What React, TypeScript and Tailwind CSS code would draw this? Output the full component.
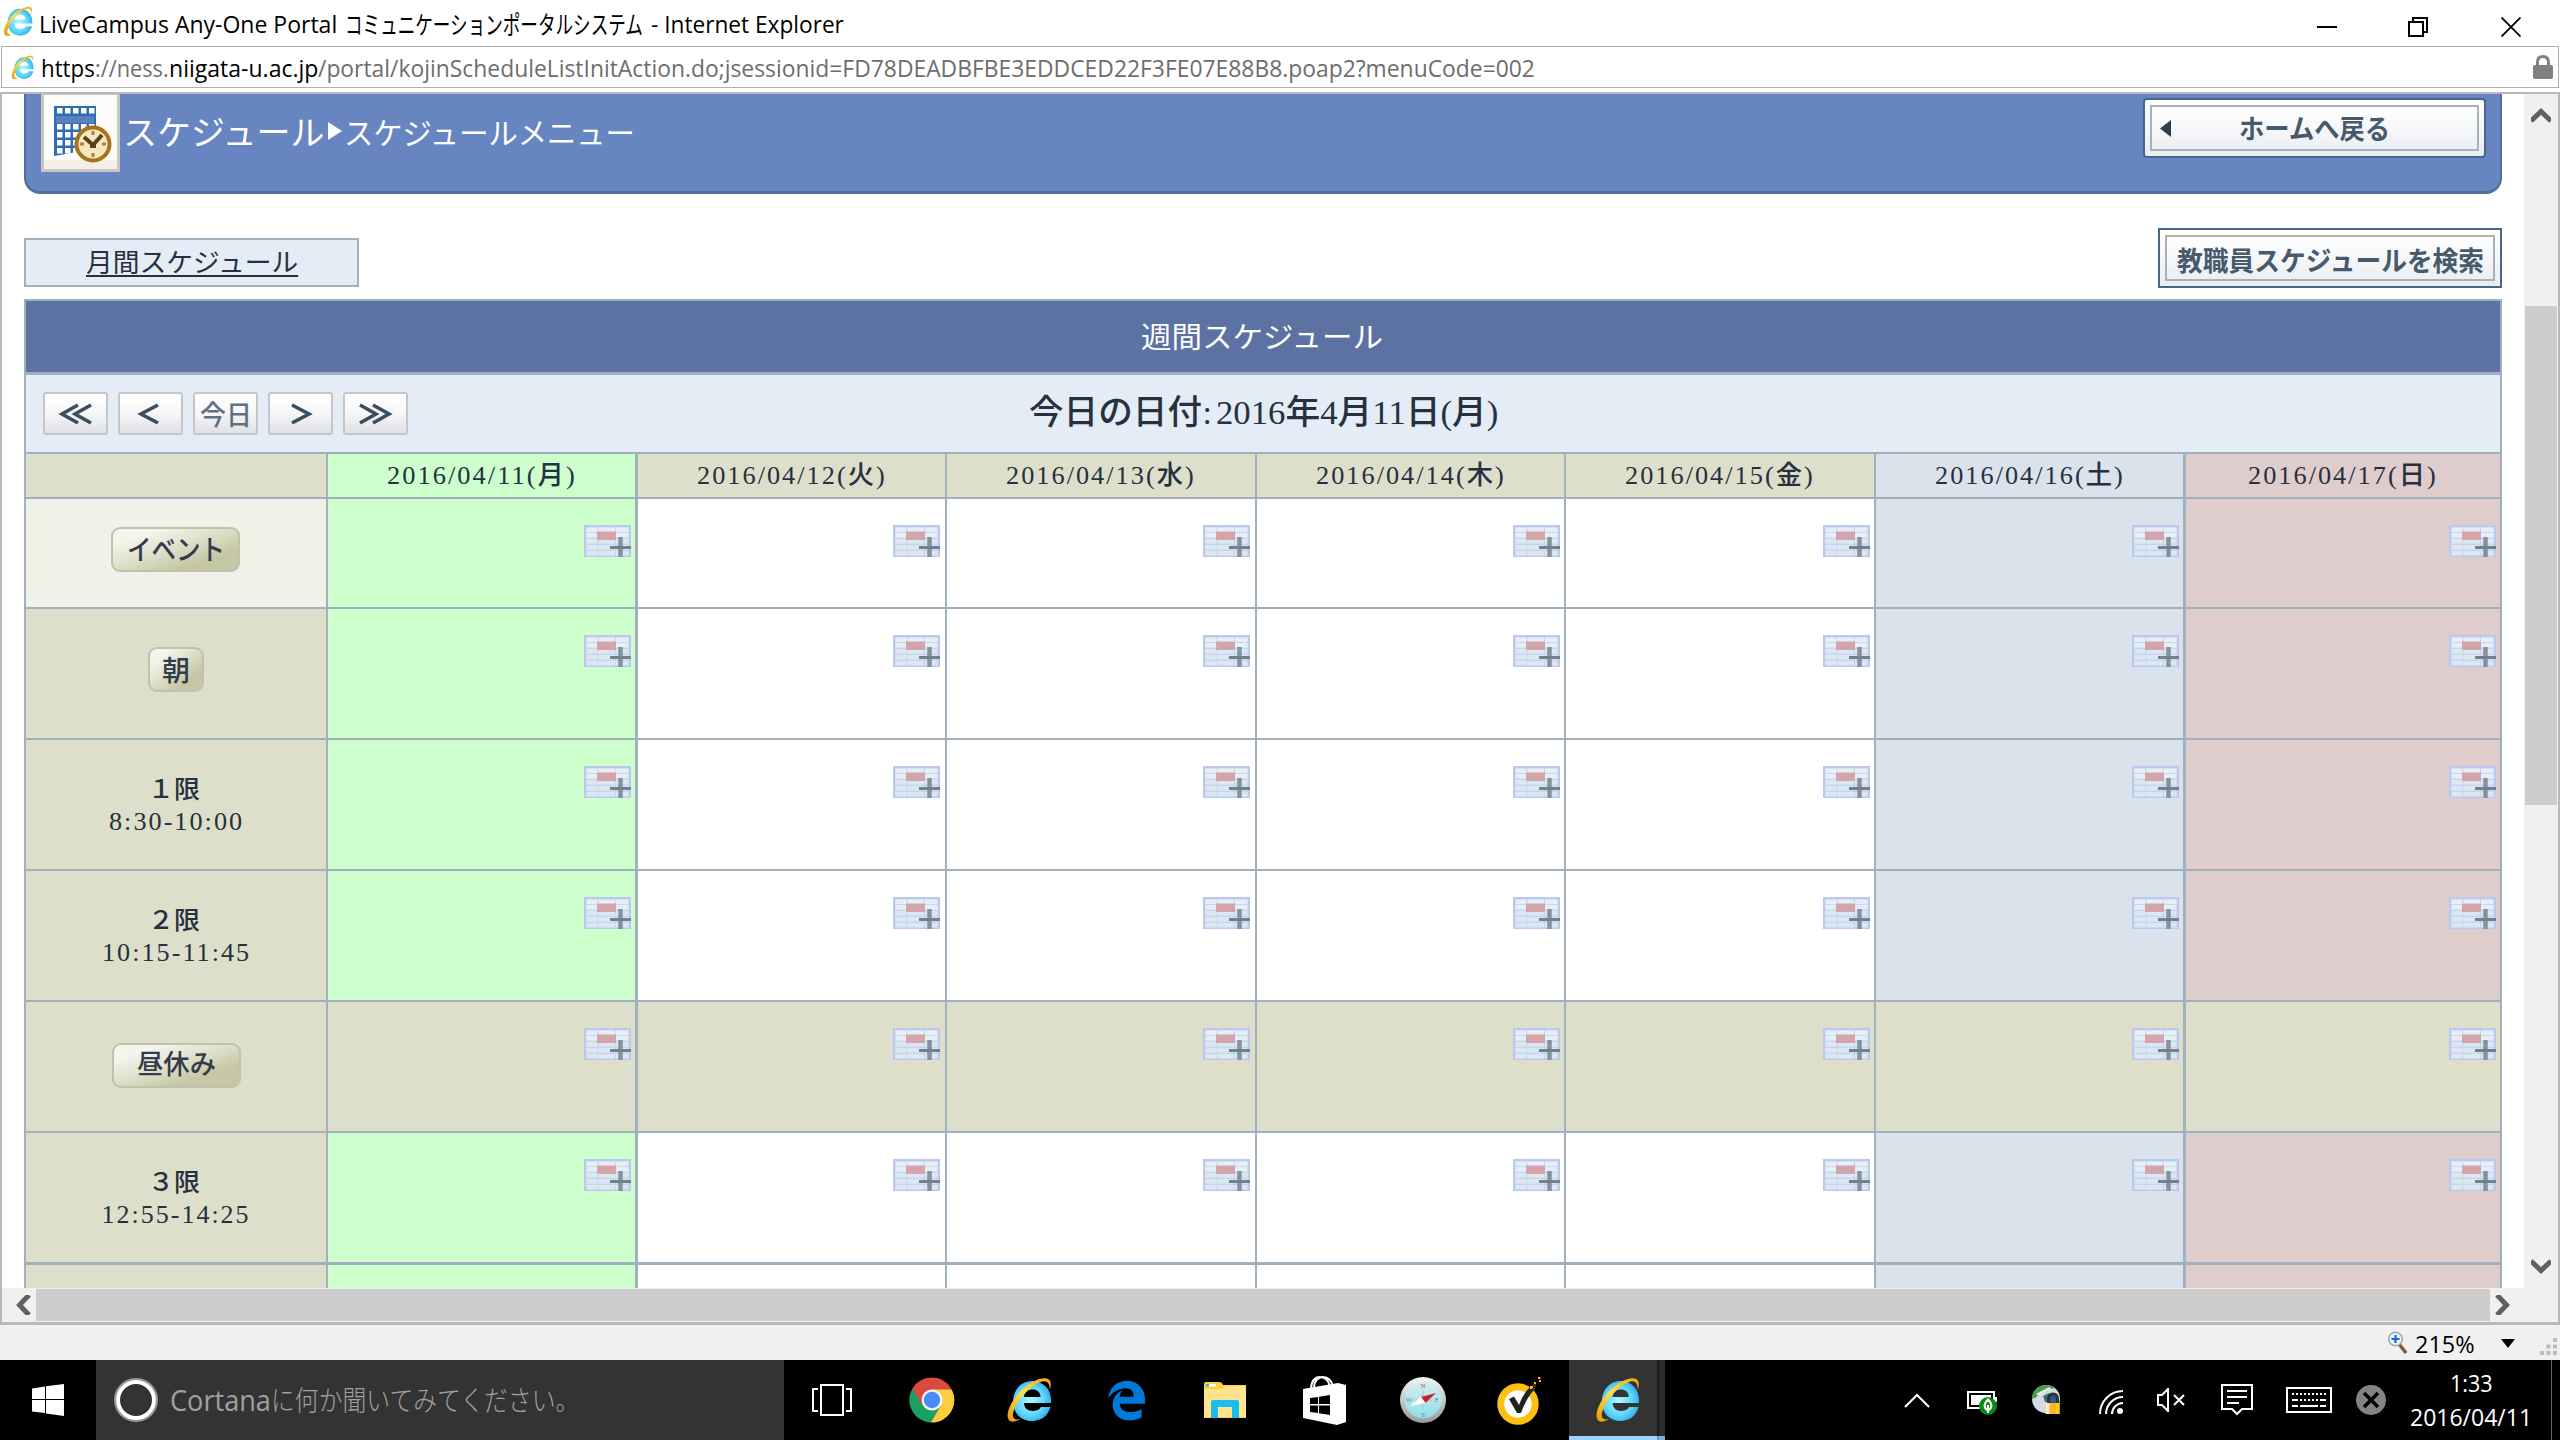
import { useLayoutEffect, useRef, type ReactNode } from "react";
import { FaEdgeLegacy } from "react-icons/fa";

/** Single line of text squeezed or stretched horizontally to a given width. */
function Fit({ w, className = "", children }: { w: number; className?: string; children: ReactNode }) {
  const ref = useRef<HTMLSpanElement>(null);
  useLayoutEffect(() => {
    const el = ref.current;
    if (el) el.style.transform = `scaleX(${w / el.offsetWidth})`;
  }, [w]);
  return (
    <span className={`block shrink-0 whitespace-nowrap ${className}`} style={{ width: w }}>
      <span ref={ref} className="inline-block origin-left">
        {children}
      </span>
    </span>
  );
}

const UI = "font-['Open_Sans','Noto_Sans_CJK_JP',sans-serif]";
const JP = "font-['Noto_Sans_CJK_JP',sans-serif]";
const SERIF = "font-['Liberation_Serif','Noto_Sans_CJK_JP',serif]";

function IeIcon({ className, id }: { className: string; id: string }) {
  return (
    <svg viewBox="0 0 46 46" preserveAspectRatio="none" className={className}>
      <defs>
        <radialGradient id={`${id}b`} cx="0.45" cy="0.5" r="0.6">
          <stop offset="0" stopColor="#b4f6ff" />
          <stop offset="0.6" stopColor="#5fd8fb" />
          <stop offset="1" stopColor="#2ba4e4" />
        </radialGradient>
        <linearGradient id={`${id}y`} x1="0" y1="1" x2="1" y2="0">
          <stop offset="0" stopColor="#e59a08" />
          <stop offset="0.5" stopColor="#ffdf4d" />
          <stop offset="1" stopColor="#f3a712" />
        </linearGradient>
      </defs>
      <path
        fillRule="evenodd"
        fill={`url(#${id}b)`}
        d="M45 26H18c0 5 4 8 8.500 8c4 0 7-1.500 8.500-4H44.500C42 39 35 44 26 44C15 44 7 36 7 25C7 13 15 4 26 4C38 4 46 13 45 26ZM18 20H34.500C34.500 15 31 12.500 26.500 12.500C22 12.500 18.500 15 18 20Z"
      />
      <path
        fill={`url(#${id}y)`}
        d="M43.500 13C46.500 5 44 0 36 1.500C22 4 5 21 2 35C0 44 5 47.500 14.500 42C8 43.500 5.500 41 7.500 34.500C11.500 22 25 7.500 36 4.500C42 3 44 7 43.500 13Z"
      />
    </svg>
  );
}

function ScheduleIcon() {
  return (
    <svg viewBox="0 0 79 78" className="h-[78px] w-[79px] shrink-0">
      <rect width="79" height="78" fill="#c9c5c5" />
      <rect x="3" y="1" width="73" height="74" fill="#fdfcfa" />
      <rect x="3" y="66" width="73" height="9" fill="#f3f0e8" />
      <path d="M13 12H55V58H36L13 62Z" fill="#2f6db3" />
      <g fill="#fff">
        {[0, 1, 2, 3, 4].map((c) =>
          [0, 2, 3, 4, 5].map((r) => <rect key={`${c}-${r}`} x={16 + c * 8} y={14 + r * 8} width="5.500" height="5.500" />),
        )}
      </g>
      <rect x="15" y="22" width="38" height="7" fill="#5a80c0" />
      <circle cx="52" cy="50" r="16.500" fill="#f7e6c0" stroke="#a8741a" strokeWidth="4" />
      <path d="M43 43L52 51L61 41" fill="none" stroke="#5a4018" strokeWidth="4" />
      <path d="M52 50V54" stroke="#5a4018" strokeWidth="6" />
      <path d="M52 37v4M52 59v4M39 50h4M61 50h4" stroke="#a08450" strokeWidth="3" />
    </svg>
  );
}

function AddIcon() {
  return (
    <svg viewBox="0 0 47 32" className="h-[32px] w-[47px]">
      <rect width="47" height="32" fill="#bcc8f0" />
      <rect x="2" y="2" width="43" height="28" fill="#c6d6e8" />
      {[2.5, 8, 14, 20, 26].map((y) =>
        [2.5, 14.5, 32].map((x, i) => (
          <rect key={`${x}-${y}`} x={x} y={y} width={[11, 16.5, 12.5][i]} height={4.6} fill={y < 10 ? "#e6eef7" : "#dbe7f3"} />
        )),
      )}
      <rect x="13" y="6.500" width="19" height="8.500" fill="#d3a4aa" />
      <path d="M36.500 12V32" stroke="#84929f" strokeWidth="4.500" />
      <path d="M26 22.500H47" stroke="#72808e" strokeWidth="3" />
    </svg>
  );
}

function ImageButton({ className, children }: { className: string; children: ReactNode }) {
  return (
    <button
      className={`flex shrink-0 border-2 border-[#44688c] bg-linear-to-b from-white to-[#e9edf1] p-[5px] ${className}`}
    >
      <span className="relative flex h-full w-full items-center justify-center border-2 border-[#a9b0b6] bg-linear-to-b from-white to-[#eceff3]">
        {children}
      </span>
    </button>
  );
}

function NavButton({ kind }: { kind: "first" | "prev" | "today" | "next" | "last" }) {
  const paths = {
    first: "M35 13L19 22L35 31M48 13L32 22L48 31",
    prev: "M40 13L23 22L40 31",
    next: "M24 13L41 22L24 31",
    last: "M17 13L33 22L17 31M30 13L46 22L30 31",
  };
  return (
    <button className="flex h-[43px] w-[65px] items-center justify-center rounded-[3px] border-2 border-[#c4c6c9] bg-linear-to-b from-white via-[#f6f6f8] to-[#dfe1e6]">
      {kind === "today" ? (
        <Fit w={52} className={`${JP} text-[27px] leading-[36px] font-medium text-[#5f7182]`}>
          今日
        </Fit>
      ) : (
        <svg viewBox="0 0 65 43" className="h-[43px] w-[65px] shrink-0" fill="none" stroke="#3b4e60" strokeWidth="3.600">
          <path d={paths[kind]} />
        </svg>
      )}
    </button>
  );
}

function Pill({ text, box, w, size }: { text: string; box: string; w: number; size: string }) {
  return (
    <button
      className={`flex h-[45px] items-center justify-center rounded-[9px] border-2 border-[#c0c2ac] bg-linear-to-br from-[#f3f4ec] from-20% via-[#dcddc6] to-[#c5c7a4] to-75% ${box}`}
    >
      <Fit w={w} className={`${JP} font-medium text-[#333c4a] ${size}`}>
        {text}
      </Fit>
    </button>
  );
}

const LINE = "border-[#a1b0bd]";
const COLS = "grid grid-cols-[302px_309px_310px_310px_309px_310px_309px_319px]";
const days = [
  { label: "2016/04/11(月)", head: "bg-[#ccffcc]", body: "bg-[#ccffcc]", edge: "border-l-2", pad: "pr-[4px]" },
  { label: "2016/04/12(火)", head: "bg-[#dddfca]", body: "bg-white", edge: "border-l-3", pad: "pr-[5px]" },
  { label: "2016/04/13(水)", head: "bg-[#dddfca]", body: "bg-white", edge: "border-l-2", pad: "pr-[5px]" },
  { label: "2016/04/14(木)", head: "bg-[#dddfca]", body: "bg-white", edge: "border-l-2", pad: "pr-[4px]" },
  { label: "2016/04/15(金)", head: "bg-[#dddfca]", body: "bg-white", edge: "border-l-2", pad: "pr-[4px]" },
  { label: "2016/04/16(土)", head: "bg-[#dae2eb]", body: "bg-[#dae2eb]", edge: "border-l-2", pad: "pr-[4px]" },
  { label: "2016/04/17(日)", head: "bg-[#dfcccd]", body: "bg-[#dfcccd]", edge: "border-l-3 border-r-2", pad: "pr-[4px]" },
];

type Row = { h: string; first: ReactNode; firstBg?: string; beige?: boolean; empty?: boolean };

function Period({ name, time, w }: { name: string; time: string; w: number }) {
  return (
    <div className="flex flex-col items-center text-[#26303f]">
      <Fit w={52} className={`${JP} mr-[4px] text-[25px] leading-[34px] font-medium`}>
        {name}
      </Fit>
      <Fit w={w} className={`${SERIF} text-[26px] leading-[36px] tracking-[2px]`}>
        {time}
      </Fit>
    </div>
  );
}

const rows: Row[] = [
  {
    h: "h-[110px] border-t-2",
    firstBg: "bg-[#f0f1e8]",
    first: (
      <div className="pr-[1px] pb-[8px]">
        <Pill text="イベント" box="w-[129px]" w={98} size="text-[28px] leading-[34px] pb-[2px]" />
      </div>
    ),
  },
  {
    h: "h-[131px] border-t-2",
    first: (
      <div className="pb-[8px]">
        <Pill text="朝" box="w-[56px]" w={28} size="text-[28px] leading-[38px] pb-[2px]" />
      </div>
    ),
  },
  { h: "h-[131px] border-t-2", first: <Period name="１限" time="8:30-10:00" w={135} /> },
  { h: "h-[131px] border-t-2", first: <Period name="２限" time="10:15-11:45" w={149} /> },
  {
    h: "h-[131px] border-t-2",
    beige: true,
    first: (
      <div className="pb-[3px]">
        <Pill text="昼休み" box="w-[129px]" w={79} size="text-[27px] leading-[34px] pb-[5px]" />
      </div>
    ),
  },
  { h: "h-[131px] border-t-2", first: <Period name="３限" time="12:55-14:25" w={149} /> },
  { h: "h-[26px] border-t-3", first: null, empty: true },
];

function Taskbar() {
  return (
    <footer className="flex h-[80px] bg-black text-white">
      <div className="flex w-[96px] items-center pl-[32px]">
        <svg viewBox="0 0 32 32" className="h-8 w-8" fill="#fff">
          <path d="M0 4.500L13 2.500V15H0ZM14 2.300L32 0V15H14ZM0 16H13V29L0 27.500ZM14 16H32V32L14 29.500Z" />
        </svg>
      </div>
      <div className="flex w-[688px] items-center bg-[#333] pl-[18px]">
        <span className="h-[44px] w-[44px] rounded-full border-2 border-[#999] p-0">
          <span className="block h-full w-full rounded-full border-4 border-white" />
        </span>
        <span className={`ml-[12px] flex text-[#a0a0a0] ${UI}`}>
          <Fit w={101} className="text-[29px] leading-[46px]">
            Cortana
          </Fit>
          <Fit w={308} className="text-[28px] leading-[46px] font-light">
            に何か聞いてみてください。
          </Fit>
        </span>
      </div>
      {/* Pinned applications */}
      <div className="flex items-center pl-[28px]">
        <svg viewBox="0 0 40 32" className="h-[32px] w-[40px]" fill="none" stroke="#fff" strokeWidth="2">
          <rect x="9" y="1" width="22" height="30" />
          <path d="M6 5H1V27H6M34 5H39V27H34" />
        </svg>
        <svg viewBox="0 0 46 46" className="ml-[57px] h-[46px] w-[46px]">
          <path d="M23 23L3.500 11.500A22.500 22.500 0 0 1 42.500 12Z" fill="#db4a3f" />
          <path d="M23 23L3.500 11.500A22.500 22.500 0 0 0 22.500 45.500L32 28Z" fill="#1aa15f" />
          <path d="M23 23V12.500H42.700A22.500 22.500 0 0 1 22 45.500L32 28Z" fill="#ffcd40" />
          <path d="M3.500 11.500L13 28L23 23L23 12.500Z" fill="#db4a3f" />
          <circle cx="23" cy="23" r="10.500" fill="#f4f6f5" />
          <circle cx="23" cy="23" r="8.200" fill="#4c8bf5" />
        </svg>
        <IeIcon id="pin" className="ml-[51px] h-[46px] w-[46px]" />
        <FaEdgeLegacy className="ml-[54px] h-[43px] w-[41px] text-[#0078d7]" />
        <svg viewBox="0 0 42 36" className="ml-[57px] h-[36px] w-[42px]">
          <path d="M0 2Q0 0 2 0H15Q18 0 19 3H42V36H0Z" fill="#ffd23e" />
          <path d="M0 7H19L21 4H42V35H0Z" fill="#ffe38f" />
          <rect x="2" y="2" width="10" height="2.500" fill="#fff" />
          <rect x="2" y="2" width="3" height="2.500" fill="#28b7e8" />
          <path d="M7 20Q7 18 9 18H33Q35 18 35 20V36H28V25H14V36H7Z" fill="#1bbcf0" />
        </svg>
        <svg viewBox="0 0 43 49" className="ml-[57px] h-[49px] w-[43px]">
          <path d="M0 13L35 7L43 9V46L34 49L0 42Z" fill="#fff" />
          <path d="M8 13C8 5 12 1 17 1S26 5 26 9M11 12C11 5 15 1 20 1S29 5 29 9" fill="none" stroke="#fff" strokeWidth="2" />
          <path d="M7 22L15 21V28H7ZM16 20.800L27 19V28H16ZM7 29.500H15V37L7 36ZM16 29.500H27V39L16 37.300Z" fill="#000" />
        </svg>
        <svg viewBox="0 0 48 48" className="ml-[53px] h-[48px] w-[48px]">
          <defs>
            <linearGradient id="rim" x1="0" y1="0" x2="0" y2="1">
              <stop offset="0" stopColor="#f4f4f4" />
              <stop offset="1" stopColor="#9a9a9a" />
            </linearGradient>
            <linearGradient id="dial" x1="0" y1="0" x2="0" y2="1">
              <stop offset="0" stopColor="#d5eef2" />
              <stop offset="1" stopColor="#8fdde6" />
            </linearGradient>
          </defs>
          <circle cx="24" cy="24" r="23" fill="url(#rim)" />
          <circle cx="24" cy="24" r="18.500" fill="url(#dial)" />
          <path d="M24 12L25.500 22.500L36 24L25.500 25.500L24 36L22.500 25.500L12 24L22.500 22.500Z" fill="#b5ccd0" />
          <path d="M37 17L26.500 27L22 21Z" fill="#cc2228" />
          <path d="M11 30L22 21L26.500 27Z" fill="#fff" />
          <g fontSize="7" textAnchor="middle" fontFamily="Liberation Serif">
            <text x="24" y="12" fill="#d33">N</text>
            <text x="24" y="41" fill="#5a8a90">S</text>
            <text x="10" y="26" fill="#5a8a90">W</text>
            <text x="38" y="26" fill="#5a8a90">E</text>
          </g>
        </svg>
        <svg viewBox="0 0 46 49" className="ml-[50px] h-[49px] w-[46px]">
          <circle cx="21" cy="28" r="17.200" fill="#fff" stroke="#fdc010" strokeWidth="7" />
          <path d="M12 23L17 20.500L22 29C25 21 28 16 34 10L38 13C31 20 27 29 24 37H20Z" fill="#222" />
          <path d="M33 10h3v3h-3zM37 6h2v2h-2zM41 1h2.500v2H41zM42 4h2v2h-2z" fill="#fdc010" />
          <path d="M35 12h3v3h-3zM36 8h3v3h-3z" fill="#333" />
        </svg>
      </div>
      <div className="ml-[26px] flex h-full">
        <div className="flex w-[88px] items-center justify-center border-b-4 border-[#99d1ff] bg-[#333] pt-1 pl-2">
          <IeIcon id="run" className="h-[46px] w-[45px]" />
        </div>
        <div className="w-[2px] border-b-4 border-[#6f97b8] bg-[#1b1b1b]" />
        <div className="w-[6px] border-b-4 border-[#80aed3] bg-[#2b2b2b]" />
      </div>
      {/* Notification area */}
      <div className="ml-auto flex items-center">
        <svg viewBox="0 0 26 15" className="h-[15px] w-[26px]" fill="none" stroke="#fff" strokeWidth="2">
          <path d="M1 14L13 2L25 14" />
        </svg>
        <svg viewBox="0 0 31 26" className="mt-[4px] ml-[37px] h-[26px] w-[31px]">
          <rect x="1" y="3" width="26" height="16" fill="none" stroke="#fff" strokeWidth="2" />
          <rect x="4" y="6" width="20" height="10" fill="#fff" />
          <path d="M28 8h2v5h-2z" fill="#fff" />
          <circle cx="21" cy="17" r="9" fill="#0a8a1a" />
          <path d="M21 10.500C16.500 15 16.500 19 21 21.500C25.500 19 25.500 15 21 10.500ZM21 16V24" fill="none" stroke="#fff" strokeWidth="2" />
        </svg>
        <svg viewBox="0 0 30 32" className="ml-[33px] h-[32px] w-[30px]">
          <circle cx="15" cy="15" r="14" fill="#d5dbe2" />
          <path d="M1 15C1 6 8 1 15 1C19 1 22 2 24 4C18 5 17 8 13 9C8 9 6 14 1 15Z" fill="#4d9a4a" />
          <path d="M5 10L18 3L21 5L8 12Z" fill="#e4eddf" />
          <path d="M12 12L18 9V18H14Z" fill="#3d7076" />
          <path d="M17.500 20V15Q17.500 10 22 10T26.500 15V20" fill="#245a8e" stroke="#2d3236" strokeWidth="3" />
          <rect x="14.500" y="19" width="14" height="11" fill="#ffb02e" />
          <rect x="14.500" y="19" width="4" height="11" fill="#ffe9c4" />
          <rect x="25" y="19" width="3.500" height="11" fill="#ffd400" />
        </svg>
        <svg viewBox="0 0 24 24" className="mt-[4px] ml-[38px] h-[24px] w-[24px]" fill="none" stroke="#fff" strokeWidth="2">
          <path d="M1 24A23 23 0 0 1 24 1M7 24A17 17 0 0 1 24 7M13 24A11 11 0 0 1 24 13" />
          <circle cx="21" cy="21" r="3" fill="#fff" stroke="none" />
        </svg>
        <svg viewBox="0 0 28 24" className="ml-[34px] h-[24px] w-[28px]" fill="none" stroke="#fff" strokeWidth="2">
          <path d="M1 7H5L11 1V23L5 17H1ZM17 7L27 17M27 7L17 17" />
        </svg>
        <svg viewBox="0 0 32 32" className="ml-[36px] h-[32px] w-[32px]" fill="none" stroke="#fff" strokeWidth="2">
          <path d="M1 1H31V25H21L16 30L11 25H1ZM6 7H26M6 13H26M6 19H18" />
        </svg>
        <svg viewBox="0 0 46 26" className="ml-[33px] h-[26px] w-[46px]" fill="none" stroke="#fff" strokeWidth="2">
          <rect x="1" y="1" width="44" height="24" />
          <path d="M6 7H40" strokeDasharray="2 2" />
          <path d="M14 13H34" strokeDasharray="2 2" />
          <path d="M6 13H12M34 13H40M6 19H12M14 19H32M34 19H40" />
        </svg>
        <svg viewBox="0 0 30 30" className="ml-[24px] h-[30px] w-[30px]">
          <circle cx="15" cy="15" r="15" fill="#838383" />
          <path d="M8 8L22 22M22 8L8 22" stroke="#000" strokeWidth="3.500" />
        </svg>
        <div className={`ml-[24px] flex flex-col items-center pb-[1px] ${UI} text-[23px] leading-[34px]`}>
          <Fit w={43}>1:33</Fit>
          <Fit w={122}>2016/04/11</Fit>
        </div>
        <div className="ml-[19px] h-full w-[9px] border-l border-[#666]" />
      </div>
    </footer>
  );
}

export default function App() {
  return (
    <div className="flex h-[1440px] w-[2560px] flex-col overflow-hidden bg-white">
      {/* Title bar */}
      <div className={`flex h-[46px] items-start pl-[3px] ${UI} text-[23px] leading-[32px] text-black`}>
        <IeIcon id="title" className="mt-[6px] h-[31px] w-[30px]" />
        <div className="ml-[6px] flex gap-[8px] pt-[8px]">
          <Fit w={298}>LiveCampus Any-One Portal</Fit>
          <Fit w={298} className="text-[25px]">コミュニケーションポータルシステム</Fit>
          <Fit w={193}>- Internet Explorer</Fit>
        </div>
        <div className="mt-[17px] ml-auto flex pr-[39px]">
          <svg viewBox="0 0 20 20" className="h-5 w-5" stroke="#000" strokeWidth="2">
            <path d="M0 10H20" />
          </svg>
          <svg viewBox="0 0 20 20" className="ml-[71px] h-5 w-5" fill="none" stroke="#000" strokeWidth="2">
            <path d="M1 5H15V19H1ZM5 5V1H19V15H15" />
          </svg>
          <svg viewBox="0 0 20 20" className="ml-[73px] h-5 w-5" stroke="#000" strokeWidth="1.800">
            <path d="M.500 .500L19.500 19.500M19.500 .500L.500 19.500" />
          </svg>
        </div>
      </div>
      {/* Address bar */}
      <div className={`mx-[1px] flex h-[42px] items-center border border-[#b0b0b0] pl-[9px] ${UI} text-[23.5px] leading-[38px]`}>
        <IeIcon id="addr" className="h-[25px] w-[23px]" />
        <div className="ml-[7px] flex pt-[2px] text-[#6d6d6d]">
          <Fit w={54} className="text-black">https</Fit>
          <Fit w={74}>://ness.</Fit>
          <Fit w={149} className="text-black">niigata-u.ac.jp</Fit>
          <Fit w={1217}>
            /portal/kojinScheduleListInitAction.do;jsessionid=FD78DEADBFBE3EDDCED22F3FE07E88B8.poap2?menuCode=002
          </Fit>
        </div>
        <svg viewBox="0 0 20 24" className="mr-[5px] ml-auto h-[24px] w-[20px]">
          <path d="M4.500 11V7.500Q4.500 1.500 10 1.500T15.500 7.500V11" fill="none" stroke="#808080" strokeWidth="3" />
          <rect y="10" width="20" height="14" rx="2" fill="#808080" />
        </svg>
      </div>
      {/* Document viewport */}
      <div className="mt-[4px] flex h-[1233px] flex-col border-t-2 border-b-3 border-l-2 border-[#b9b9b9]">
        <div className="flex h-[1194px] overflow-hidden">
          <main className="w-[2522px] pl-[22px]">
            <div className="flex h-[100px] w-[2478px] items-start rounded-b-[16px] border-x-2 border-b-3 border-[#50709a] bg-[#6785c1] pl-[15px]">
              <ScheduleIcon />
              <div className={`ml-[3px] flex items-center pt-[12px] text-white ${JP}`}>
                <Fit w={202} className="text-[34px] leading-[50px]">スケジュール</Fit>
                <svg viewBox="0 0 14 18" className="ml-[3px] h-[18px] w-[14px]" fill="#fff">
                  <path d="M0 0L14 9L0 18Z" />
                </svg>
                <Fit w={291} className="ml-[2px] text-[30px] leading-[50px]">スケジュールメニュー</Fit>
              </div>
              <ImageButton className="mt-[4px] mr-[14px] ml-auto h-[60px] w-[343px] rounded-[4px]">
                <svg viewBox="0 0 11 17" className="absolute top-[13px] left-[8px] h-[17px] w-[11px]" fill="#2c3e50">
                  <path d="M11 0V17L0 8.500Z" />
                </svg>
                <Fit w={151} className={`${JP} text-[27px] leading-[40px] font-bold text-[#465a6c]`}>ホームへ戻る</Fit>
              </ImageButton>
            </div>
            <div className="flex h-[105px] w-[2478px] items-start justify-between">
              <a className="mt-[44px] flex h-[49px] w-[335px] items-center justify-center border-2 border-[#a1b0bd] bg-[#e4ecf6]">
                <Fit w={212} className={`${JP} mt-[-4px] text-[26px] leading-[40px] text-[#26303f]`}>
                  <span className="underline decoration-2 underline-offset-[3px]">月間スケジュール</span>
                </Fit>
              </a>
              <ImageButton className="mt-[34px] h-[60px] w-[344px]">
                <Fit w={307} className={`${JP} pt-[4px] text-[27px] leading-[40px] font-bold text-[#465a6c]`}>教職員スケジュールを検索</Fit>
              </ImageButton>
            </div>
            {/* Weekly table */}
            <div className={`flex h-[73px] w-[2478px] items-center justify-center border-x-2 border-t-2 bg-[#5b72a2] ${LINE}`}>
              <Fit w={242} className={`${JP} mr-[2px] pb-[4px] text-[29px] leading-[44px] text-white`}>週間スケジュール</Fit>
            </div>
            <div className={`grid h-[80px] w-[2478px] grid-cols-[1fr_auto_1fr] items-center border-x-2 border-t-3 bg-[#e4ecf6] ${LINE}`}>
              <div className="flex gap-[10px] pl-[17px]">
                <NavButton kind="first" />
                <NavButton kind="prev" />
                <NavButton kind="today" />
                <NavButton kind="next" />
                <NavButton kind="last" />
              </div>
              <div className={`flex pb-[2px] text-[#26303f] ${SERIF} text-[34px] leading-[48px] font-medium`}>
                <Fit w={173}>今日の日付</Fit>
                <Fit w={9} className="ml-[1px]">:</Fit>
                <Fit w={282} className="ml-[4px]">2016年4月11日(月)</Fit>
              </div>
            </div>
            <div className={`${COLS} h-[45px] border-t-2 ${LINE} w-[2478px]`}>
              <div className={`border-l-2 bg-[#dddfca] ${LINE}`} />
              {days.map((d) => (
                <div key={d.label} className={`flex items-center justify-center ${d.edge} ${LINE} ${d.head}`}>
                  <Fit w={190} className={`${SERIF} text-[26px] leading-[38px] font-medium tracking-[2px] text-[#26303f]`}>{d.label}</Fit>
                </div>
              ))}
            </div>
            {rows.map((r, i) => (
              <div key={i} className={`${COLS} ${r.h} ${LINE} w-[2478px]`}>
                <div className={`flex items-center justify-center border-l-2 ${LINE} ${r.firstBg ?? "bg-[#dddfca]"}`}>{r.first}</div>
                {days.map((d) => (
                  <div
                    key={d.label}
                    className={`flex items-start justify-end ${d.edge} ${d.pad} ${LINE} ${r.beige ? "bg-[#dddfca]" : d.body} ${r.empty ? "" : "pt-[26px]"}`}
                  >
                    {!r.empty && <AddIcon />}
                  </div>
                ))}
              </div>
            ))}
          </main>
          {/* Vertical scrollbar */}
          <div className="flex w-[36px] flex-col items-center border-r-2 border-[#b9b9b9] bg-[#f0f0f0]">
            <svg viewBox="0 0 20 15" className="mt-[14px] h-[15px] w-[20px]" fill="none" stroke="#606060" strokeWidth="5">
              <path d="M0 13L10 3.500L20 13" />
            </svg>
            <div className="mt-[183px] h-[499px] w-[32px] bg-[#cdcdcd]" />
            <svg viewBox="0 0 20 15" className="mt-auto mb-[14px] h-[15px] w-[20px]" fill="none" stroke="#606060" strokeWidth="5">
              <path d="M0 2L10 11.500L20 2" />
            </svg>
          </div>
        </div>
        {/* Horizontal scrollbar */}
        <div className="flex h-[34px] w-[2558px] items-center border-r-2 border-[#b9b9b9] bg-[#f0f0f0] pl-[14px]">
          <svg viewBox="0 0 15 20" className="h-[20px] w-[15px]" fill="none" stroke="#606060" strokeWidth="5">
            <path d="M13 0L3.500 10L13 20" />
          </svg>
          <div className="ml-[5px] h-[32px] w-[2454px] bg-[#cdcdcd]" />
          <svg viewBox="0 0 15 20" className="ml-[5px] h-[20px] w-[15px]" fill="none" stroke="#606060" strokeWidth="5">
            <path d="M2 0L11.500 10L2 20" />
          </svg>
        </div>
      </div>
      {/* Status bar */}
      <div className={`flex h-[35px] items-center justify-end bg-[#f0f0f0] pr-[3px] text-black ${UI}`}>
        <svg viewBox="0 0 20 24" className="h-[24px] w-[20px]">
          <path d="M11 13L18 22" stroke="#8a5a34" strokeWidth="3.500" />
          <circle cx="7.500" cy="8" r="6.800" fill="#eaf4fd" stroke="#9aa8b8" strokeWidth="1.500" />
          <path d="M7.500 4V12M3.500 8H11.500" stroke="#1767c9" strokeWidth="2.200" />
        </svg>
        <Fit w={59} className="ml-[7px] pt-[3px] text-[23px] leading-[32px]">215%</Fit>
        <svg viewBox="0 0 14 9" className="mt-[2px] ml-[27px] h-[9px] w-[14px]">
          <path d="M0 0H14L7 9Z" />
        </svg>
        <svg viewBox="0 0 17 17" className="mt-[8px] ml-[25px] h-[17px] w-[17px]" fill="#bcbcbc">
          <path d="M13 0h4v4h-4zM13 6.500h4v4h-4zM6.500 6.500h4v4h-4zM13 13h4v4h-4zM6.500 13h4v4h-4zM0 13h4v4H0z" />
        </svg>
      </div>
      <Taskbar />
    </div>
  );
}
